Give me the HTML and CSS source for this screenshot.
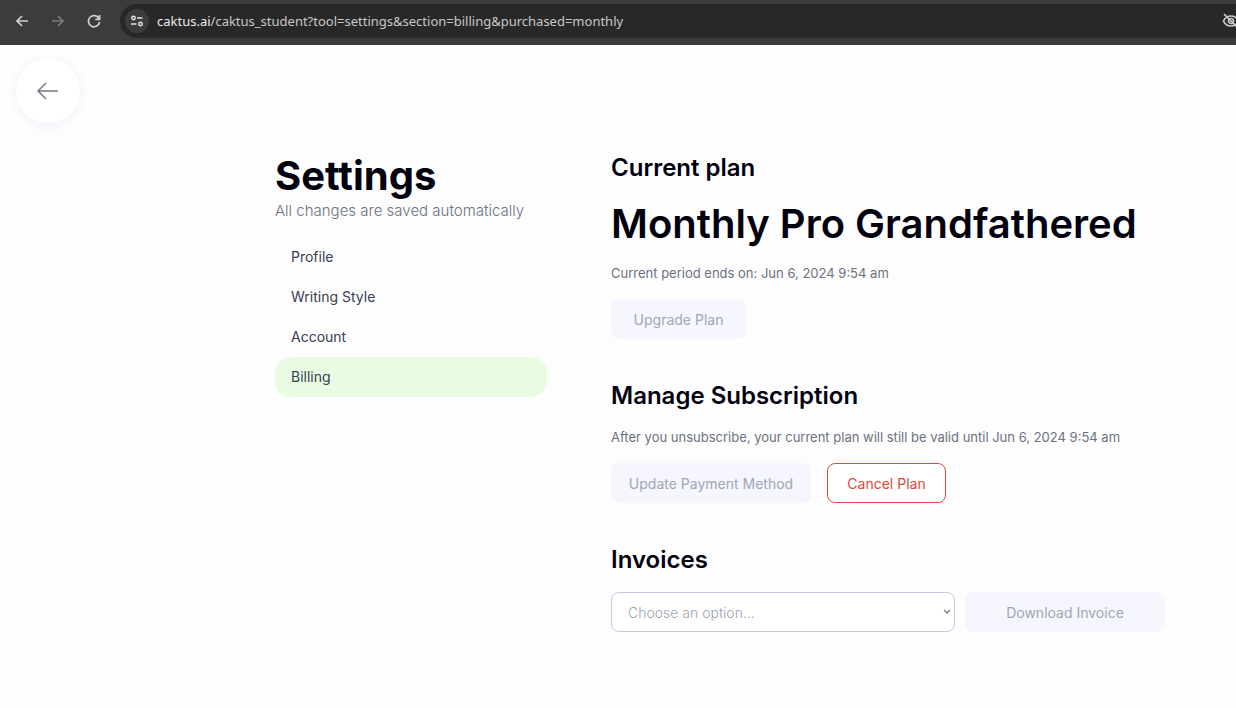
FILE: index.html
```html
<!DOCTYPE html>
<html lang="en">
    <head>
        <title>Settings - Billing</title>
        <meta charset="utf-8" />
        <meta name="viewport" content="width=device-width, initial-scale=1" />
        <link rel="stylesheet" href="styles.css">
    </head>
    <body>
        <header class="toolbar">
            <button type="button" class="tool" aria-label="Back">
                <svg width="14" height="14" viewBox="0 0 14 14"><path d="M13 7H2M7 2L2 7l5 5" /></svg>
            </button>
            <button type="button" class="tool dim" aria-label="Forward">
                <svg width="14" height="14" viewBox="0 0 14 14"><path d="M1 7h11M7 2l5 5-5 5" /></svg>
            </button>
            <button type="button" class="tool" aria-label="Reload">
                <svg width="14" height="14" viewBox="0 0 14 14"><path d="M12 4.500A5.600 5.600 0 1 0 12.600 8M12.600 1v4.300H8.300" /></svg>
            </button>
            <div class="address">
                <button type="button" class="site-info" aria-label="Site information">
                    <svg width="14" height="14" viewBox="0 0 14 14"><circle cx="3.500" cy="4" r="1.700" /><path d="M7 4h5.500M1 10h5.500" /><circle cx="10.500" cy="10" r="1.700" /></svg>
                </button>
                <span class="url"><span class="host">caktus.ai</span>/caktus_student?tool=settings&amp;section=billing&amp;purchased=monthly</span>
                <svg class="eye" width="18" height="18" viewBox="0 0 18 18"><path d="M1.500 9C3 5.600 5.800 4 9 4s6 1.600 7.500 5c-1.500 3.400-4.300 5-7.500 5S3 12.400 1.500 9z" /><circle cx="9" cy="9" r="2.500" /><path d="M2 2l14 14" /></svg>
            </div>
        </header>

        <a href="#" class="back" aria-label="Go back">
            <svg width="22" height="18" viewBox="0 0 22 18"><path d="M21 9H1M9 1L1 9l8 8" /></svg>
        </a>

        <main class="page">
            <aside class="sidebar">
                <h1>Settings</h1>
                <p class="note">All changes are saved automatically</p>
                <nav class="menu">
                    <a href="#">Profile</a>
                    <a href="#">Writing Style</a>
                    <a href="#">Account</a>
                    <a href="#" class="active">Billing</a>
                </nav>
            </aside>

            <div class="content">
                <section>
                    <h2>Current plan</h2>
                    <p class="plan">Monthly Pro Grandfathered</p>
                    <p>Current period ends on: Jun 6, 2024 9:54 am</p>
                    <div class="row">
                        <button type="button" class="btn upgrade">Upgrade Plan</button>
                    </div>
                </section>

                <section>
                    <h2>Manage Subscription</h2>
                    <p>After you unsubscribe, your current plan will still be valid until Jun 6, 2024 9:54 am</p>
                    <div class="row">
                        <button type="button" class="btn wide">Update Payment Method</button>
                        <button type="button" class="btn cancel">Cancel Plan</button>
                    </div>
                </section>

                <section>
                    <h2 id="invoices">Invoices</h2>
                    <div class="row invoice">
                        <div class="select">
                            <select aria-labelledby="invoices">
                                <option>Choose an option...</option>
                            </select>
                            <svg width="8" height="6" viewBox="0 0 8 6"><path d="M1 1l3 3 3-3" /></svg>
                        </div>
                        <button type="button" class="btn wide">Download Invoice</button>
                    </div>
                </section>
            </div>
        </main>
    </body>
</html>
```
FILE: styles.css
```css
* {
    box-sizing: border-box;
}
body {
    margin: 0;
    font-family: Inter, "Liberation Sans", sans-serif;
    font-size: 14px;
    color: #6b7280;
    background-color: #fdfdfd;
}
h1, h2, p {
    margin: 0;
}
button, select {
    font-family: inherit;
    font-size: inherit;
    cursor: pointer;
}
svg {
    display: block;
    fill: none;
    stroke: currentColor;
    flex-shrink: 0;
}

/* Browser toolbar */
.toolbar {
    display: flex;
    align-items: center;
    height: 45px;
    padding: 0 0 3px 4px;
    background-color: #3c3c3c;
    overflow: hidden;
}
.tool {
    display: flex;
    justify-content: center;
    width: 36px;
    padding: 0;
    border: none;
    background: none;
    color: #d0d0d0;
    stroke-width: 1.7;
}
.dim {
    color: #7c7c7c;
}
.address {
    display: flex;
    flex: 1;
    align-items: center;
    height: 34px;
    min-width: 0;
    margin-left: 8px;
    padding-left: 5px;
    border-radius: 17px 0 0 17px;
    background-color: #282828;
    color: #c8c8c8;
    overflow: hidden;
}
.site-info {
    display: flex;
    align-items: center;
    justify-content: center;
    width: 24px;
    height: 24px;
    padding: 0;
    border: none;
    border-radius: 50%;
    background-color: #3c3c3c;
    color: #e3e3e3;
    stroke-width: 1.5;
}
.url {
    flex: 1;
    margin-left: 8px;
    font-family: "Noto Sans", "Open Sans", sans-serif;
    font-size: 13px;
    white-space: nowrap;
}
.host {
    color: #ececec;
}
.eye {
    margin-right: -4px;
    stroke-width: 1.7;
}

/* Round back button */
.back {
    display: flex;
    align-items: center;
    justify-content: center;
    width: 64px;
    height: 64px;
    margin: 14px 0 0 16px;
    border-radius: 50%;
    background-color: #fff;
    color: #747786;
    stroke-width: 1.5;
    box-shadow: 0 2px 8px 2px #f4f4fc;
}

/* Page */
.page {
    display: flex;
    gap: 64px;
    padding: 29px 71px 64px 275px;
}
.sidebar {
    width: 272px;
    flex-shrink: 0;
}
h1, .plan {
    font-size: 40px;
    font-weight: 600;
    line-height: 48px;
    color: #02020f;
}
h1 {
    font-weight: 700;
}
.note {
    font-size: 15px;
    font-weight: 300;
    line-height: 21px;
}
.menu {
    margin-top: 16px;
}
.menu a {
    display: block;
    padding: 0 16px;
    border-radius: 16px;
    line-height: 40px;
    color: #374151;
    text-decoration: none;
}
.menu .active {
    background-color: #e9fce3;
}
.content {
    display: flex;
    flex: 1;
    flex-direction: column;
    gap: 41px;
    min-width: 0;
}
section {
    display: flex;
    flex-direction: column;
    gap: 16px;
}
section p {
    font-size: 13px;
    line-height: 19px;
}
section .plan {
    font-size: 40px;
    line-height: 48px;
    white-space: nowrap;
}
h2 {
    font-size: 24px;
    font-weight: 600;
    line-height: 32px;
    color: #02020f;
}

/* Buttons and drop-down */
.row {
    display: flex;
    gap: 16px;
}
.btn {
    height: 40px;
    padding: 0 16px;
    border: none;
    border-radius: 8px;
    background-color: #f5f6fe;
    color: #a0a7b7;
    white-space: nowrap;
}
.upgrade {
    width: 135px;
}
.wide {
    width: 200px;
}
.cancel {
    width: 119px;
    border: 1px solid #d9493b;
    background-color: #fff;
    color: #d9493b;
}
.invoice {
    gap: 10px;
}
.select {
    position: relative;
    flex: 1;
}
.select select {
    width: 100%;
    height: 40px;
    padding: 0 24px 0 16px;
    border: 1px solid #c9c8e0;
    border-radius: 8px;
    background-color: #fff;
    color: #9ca3af;
    font-weight: 300;
    appearance: none;
}
.select svg {
    position: absolute;
    top: 17px;
    right: 4px;
    color: #777;
    stroke-width: 1.3;
    pointer-events: none;
}
```
